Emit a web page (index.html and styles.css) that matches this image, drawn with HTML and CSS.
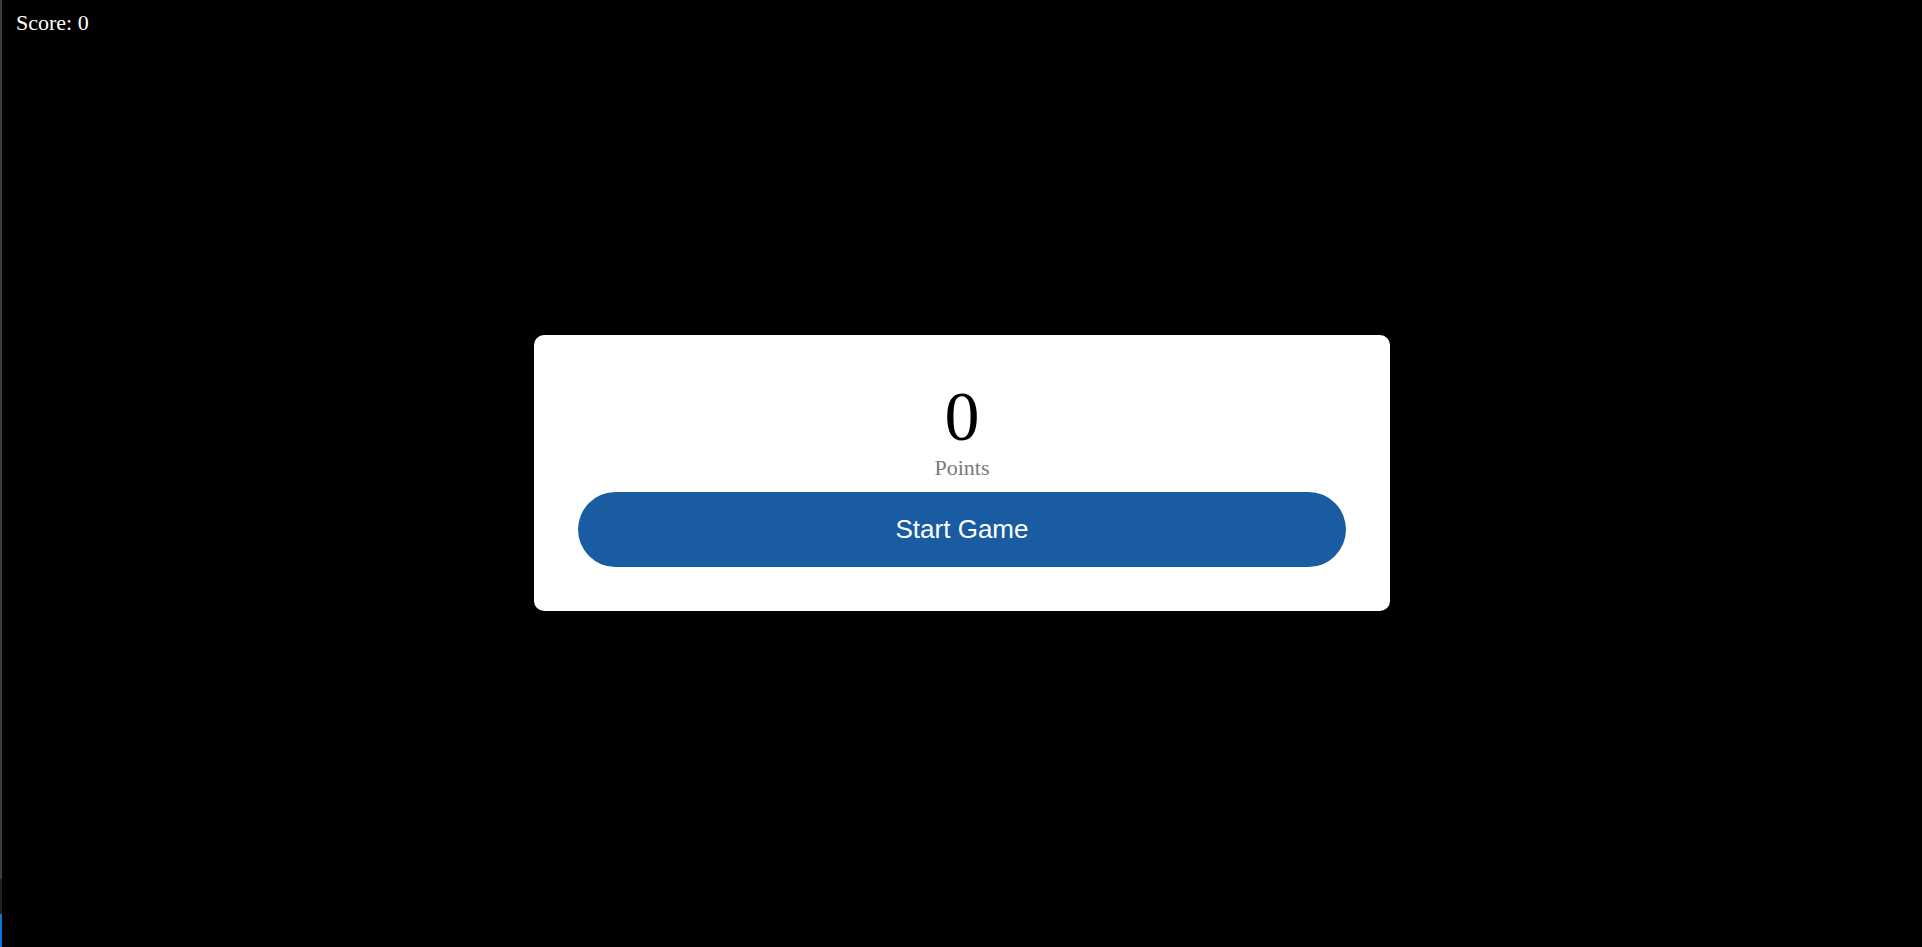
FILE: index.html
```html
<!DOCTYPE html>
<html lang="en">
<head>
<meta charset="utf-8">
<title>Game</title>
<link rel="stylesheet" href="styles.css">
</head>
<body>
<div class="edge">
  <div class="edge-top"></div>
  <div class="edge-mid"></div>
  <div class="edge-bot"></div>
</div>
<div class="score">Score: 0</div>
<main class="stage">
  <section class="card">
    <div class="value">0</div>
    <div class="label">Points</div>
    <button class="start">Start Game</button>
  </section>
</main>
</body>
</html>
```

FILE: styles.css
```css
html, body {
  margin: 0;
  padding: 0;
  height: 100%;
  background: #000;
  overflow: hidden;
}
body {
  font-family: "Liberation Serif", "Times New Roman", serif;
}
.edge {
  position: fixed;
  left: 0;
  top: 0;
  bottom: 0;
  width: 2px;
  display: flex;
  flex-direction: column;
}
.edge-top {
  flex: 1;
  background: #3e3e3e;
}
.edge-mid {
  height: 35px;
  background: #232323;
}
.edge-bot {
  height: 33px;
  background: #0a78d6;
}
.score {
  position: absolute;
  left: 16px;
  top: 10px;
  color: #fff;
  font-size: 22px;
  line-height: 25px;
}
.stage {
  height: 100%;
  display: flex;
  align-items: center;
  justify-content: center;
  padding: 0 0 1px 2px;
  box-sizing: border-box;
}
.card {
  width: 856px;
  box-sizing: border-box;
  background: #fff;
  border-radius: 10px;
  padding: 43px 44px 44px;
  display: flex;
  flex-direction: column;
  align-items: center;
  text-align: center;
}
.value {
  font-size: 70px;
  line-height: 77px;
  color: #000;
}
.label {
  font-size: 22px;
  line-height: 25px;
  color: #7a7a7a;
}
.start {
  margin-top: 12px;
  width: 100%;
  height: 75px;
  border: none;
  border-radius: 38px;
  background: #1a5ca1;
  color: #fff;
  font-family: "Liberation Sans", Arial, sans-serif;
  font-size: 26px;
  cursor: pointer;
}
```
